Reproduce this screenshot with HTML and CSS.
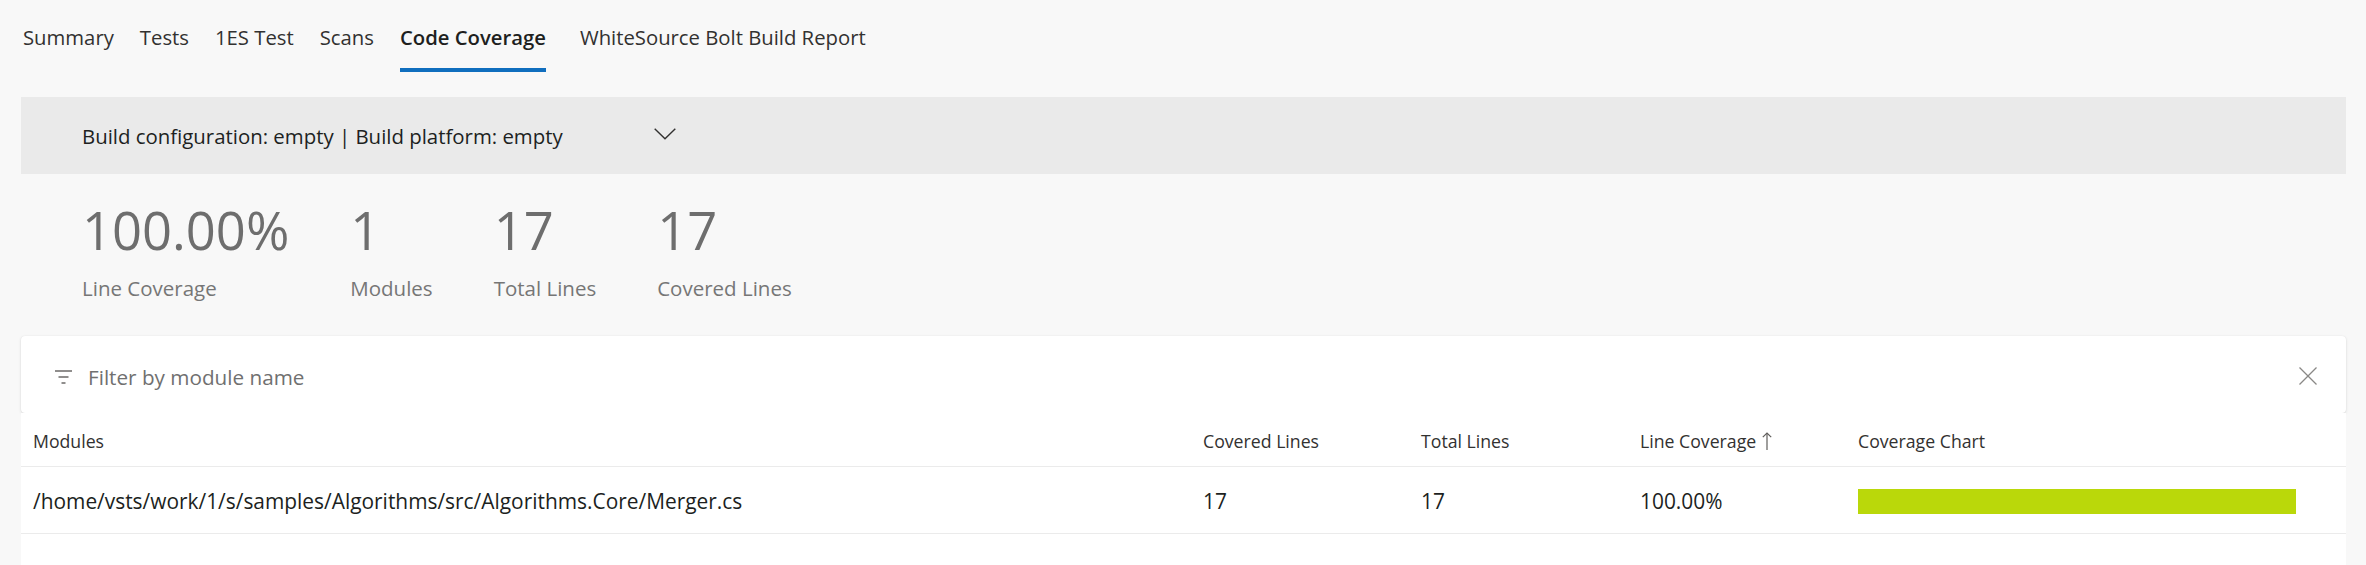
FILE: index.html
```html
<!DOCTYPE html>
<html lang="en">
<head>
<meta charset="utf-8">
<title>Code Coverage</title>
<link rel="stylesheet" href="styles.css">
</head>
<body>
<div class="page">
  <nav class="tabs">
    <div class="tab">Summary</div>
    <div class="tab">Tests</div>
    <div class="tab">1ES Test</div>
    <div class="tab">Scans</div>
    <div class="tab active">Code Coverage</div>
    <div class="tab">WhiteSource Bolt Build Report</div>
  </nav>

  <div class="config-bar">
    <div class="config-label">Build configuration: empty | Build platform: empty</div>
    <svg class="chevron" width="22" height="12" viewBox="0 0 22 12"><polyline points="0.7,0.7 11,10.8 21.3,0.7" fill="none" stroke="#323130" stroke-width="1.4"/></svg>
  </div>

  <div class="stats">
    <div class="stat"><div class="stat-value">100.00%</div><div class="stat-label">Line Coverage</div></div>
    <div class="stat"><div class="stat-value">1</div><div class="stat-label">Modules</div></div>
    <div class="stat"><div class="stat-value">17</div><div class="stat-label">Total Lines</div></div>
    <div class="stat"><div class="stat-value">17</div><div class="stat-label">Covered Lines</div></div>
  </div>

  <div class="filter-card">
    <svg class="filter-icon" width="18" height="14" viewBox="0 0 18 14"><g stroke="#605e5c" stroke-width="1.4"><line x1="0" y1="1" x2="17" y2="1"/><line x1="3.5" y1="7" x2="13.5" y2="7"/><line x1="6.5" y1="13" x2="10.5" y2="13"/></g></svg>
    <div class="filter-text">Filter by module name</div>
    <svg class="close-icon" width="18" height="18" viewBox="0 0 18 18"><g stroke="#8a8886" stroke-width="1.3"><line x1="0.5" y1="0.5" x2="17.5" y2="17.5"/><line x1="17.5" y1="0.5" x2="0.5" y2="17.5"/></g></svg>
  </div>

  <div class="table">
    <div class="row head">
      <div class="cell">Modules</div>
      <div class="cell">Covered Lines</div>
      <div class="cell">Total Lines</div>
      <div class="cell sorted">Line Coverage <svg class="sort-arrow" width="10" height="18" viewBox="0 0 10 18"><g fill="none" stroke="#605e5c" stroke-width="1.2"><line x1="5" y1="1" x2="5" y2="18"/><polyline points="0.8,5.2 5,1 9.2,5.2"/></g></svg></div>
      <div class="cell">Coverage Chart</div>
    </div>
    <div class="row">
      <div class="cell">/home/vsts/work/1/s/samples/Algorithms/src/Algorithms.Core/Merger.cs</div>
      <div class="cell">17</div>
      <div class="cell">17</div>
      <div class="cell">100.00%</div>
      <div class="cell"><div class="bar-track"><div class="bar" style="width:100%"></div></div></div>
    </div>
    <div class="table-rest"></div>
  </div>
</div>
</body>
</html>
```

FILE: styles.css
```css
html, body {
  margin: 0;
  padding: 0;
  background: #f8f8f8;
}

body {
  font-family: "Open Sans", "Noto Sans", sans-serif;
  color: #323130;
}

.page {
  padding: 0 20px 0 21px;
}

/* Tabs */
.tabs {
  display: flex;
  gap: 26px;
  padding-left: 2px;
}

.tab {
  font-size: 20.3px;
  line-height: 28px;
  padding: 23px 0 17px;
  border-bottom: 4px solid transparent;
  color: #323130;
  white-space: nowrap;
}

.tab.active {
  font-weight: 600;
  color: #201f1e;
  border-bottom-color: #106ebe;
  margin-right: 8px;
}

/* Config bar */
.config-bar {
  margin-top: 25px;
  height: 77px;
  background: #eaeaea;
  display: flex;
  align-items: center;
  padding-left: 61px;
}

.config-label {
  width: 572px;
  font-size: 20.4px;
  line-height: 28px;
  color: #201f1e;
  white-space: nowrap;
  padding-top: 1px;
}

.chevron {
  display: block;
  margin-top: -4px;
}

/* Stats */
.stats {
  display: flex;
  gap: 61px;
  padding-left: 61px;
  margin-top: 24px;
}

.stat-value {
  font-size: 52.5px;
  line-height: 64px;
  color: #6e6e6e;
}

.stat-label {
  margin-top: 12px;
  font-size: 20.5px;
  line-height: 28px;
  color: #767676;
  white-space: nowrap;
}

/* Filter card */
.filter-card {
  margin-top: 34px;
  height: 77px;
  box-sizing: border-box;
  background: #ffffff;
  border-radius: 4px;
  box-shadow: 0 1px 3px rgba(0, 0, 0, 0.13), 0 0 1px rgba(0, 0, 0, 0.08);
  display: flex;
  align-items: center;
  padding: 4px 29px 0 34px;
}

.filter-icon {
  display: block;
  margin-right: 15px;
}

.filter-text {
  flex: 1;
  font-size: 20.7px;
  line-height: 28px;
  color: #707070;
}

.close-icon {
  display: block;
  margin-top: -2px;
}

/* Table */
.table {
  background: #ffffff;
}

.row {
  display: grid;
  grid-template-columns: 1fr 218px 219px 218px 500px;
  align-items: center;
  border-bottom: 1px solid #ebebeb;
  box-sizing: border-box;
}

.row.head {
  height: 54px;
  padding-top: 2px;
  font-size: 17.7px;
  color: #323130;
}

.row:not(.head) {
  height: 67px;
  padding-top: 2px;
  font-size: 20.9px;
  color: #201f1e;
}

.cell {
  padding-left: 12px;
  white-space: nowrap;
}

.cell.sorted {
  display: flex;
  align-items: center;
  gap: 6px;
}

.sort-arrow {
  display: block;
}

.bar-track {
  width: 438px;
  height: 25px;
}

.bar {
  height: 100%;
  background: #bad80a;
}

.table-rest {
  height: 40px;
}
```
